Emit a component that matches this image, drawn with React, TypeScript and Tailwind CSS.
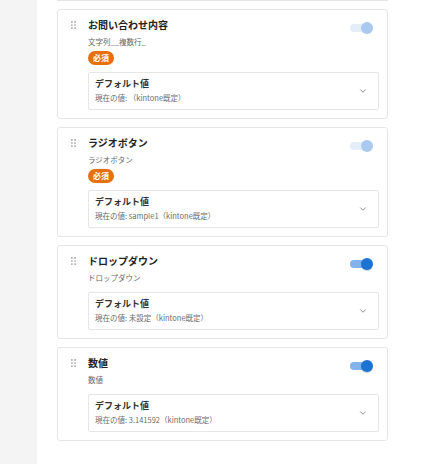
import { ChevronDown } from 'lucide-react';

type Field = {
	title: string;
	code: string;
	required: boolean;
	enabled: boolean;
	current: string;
};

const fields: Field[] = [
	{ title: 'お問い合わせ内容', code: '文字列__複数行_', required: true, enabled: false, current: '現在の値: （kintone既定）' },
	{ title: 'ラジオボタン', code: 'ラジオボタン', required: true, enabled: false, current: '現在の値: sample1（kintone既定）' },
	{ title: 'ドロップダウン', code: 'ドロップダウン', required: false, enabled: true, current: '現在の値: 未設定（kintone既定）' },
	{ title: '数値', code: '数値', required: false, enabled: true, current: '現在の値: 3.141592（kintone既定）' },
];

function DragHandle() {
	return (
		<svg className="w-[5px] h-[8px] text-[#9a9a9a]" viewBox="0 0 5 8" fill="currentColor">
			<circle cx="0.9" cy="0.9" r="0.85" />
			<circle cx="4.1" cy="0.9" r="0.85" />
			<circle cx="0.9" cy="4" r="0.85" />
			<circle cx="4.1" cy="4" r="0.85" />
			<circle cx="0.9" cy="7.1" r="0.85" />
			<circle cx="4.1" cy="7.1" r="0.85" />
		</svg>
	);
}

function Toggle({ enabled }: { enabled: boolean }) {
	return (
		<div className="relative w-[23px] h-[12px] mt-[4px] -mb-[2px] mr-[6px] flex items-center">
			<div className={enabled ? 'w-[20px] h-[8px] rounded-full bg-[#82b3ea]' : 'w-[20px] h-[8px] rounded-full bg-[#e5edf8]'} />
			<div
				className={
					enabled
						? 'absolute right-0 top-0 w-[12px] h-[12px] rounded-full bg-[#1b74d3] shadow-[0_1px_1px_rgba(0,0,0,0.2)]'
						: 'absolute right-0 top-0 w-[12px] h-[12px] rounded-full bg-[#a9c9f0]'
				}
			/>
		</div>
	);
}

function FieldCard({ field }: { field: Field }) {
	return (
		<div className="flex border border-[#e6e6e6] rounded-[3px] bg-white pl-[13px] pr-[8px] pt-[8px] pb-[8px]">
			<div className="w-[17px] shrink-0 h-[14px] flex items-center">
				<DragHandle />
			</div>
			<div className="flex-1 flex flex-col">
				<div className="flex items-start justify-between">
					<h3 className="text-[10px] leading-[14px] font-bold text-[#222]">{field.title}</h3>
					<Toggle enabled={field.enabled} />
				</div>
				<p className="mt-[4px] text-[7.5px] leading-[12px] text-[#666]">{field.code}</p>
				{field.required && (
					<span className="mt-[3px] self-start h-[14px] px-[5px] rounded-full bg-[#e5700d] text-white text-[8px] leading-[14px] font-bold">
						必須
					</span>
				)}
				<div
					className={
						field.required
							? 'mt-[7px] flex items-center justify-between border border-[#e6e6e6] rounded-[2px] pl-[6px] pr-[10px] pt-[5px] pb-[6px]'
							: 'mt-2 flex items-center justify-between border border-[#e6e6e6] rounded-[2px] pl-[6px] pr-[10px] pt-[5px] pb-[6px]'
					}
				>
					<div className="flex flex-col">
						<span className="text-[9px] leading-[12px] font-semibold text-[#333]">デフォルト値</span>
						<span className="mt-[2px] text-[7.5px] leading-[11px] text-[#6b6b6b]">{field.current}</span>
					</div>
					<ChevronDown className="w-[10px] h-[10px] text-[#666]" strokeWidth={1.75} />
				</div>
			</div>
		</div>
	);
}

export default function App() {
	return (
		<div
			className="flex w-[445px] h-[464px] overflow-hidden bg-white"
			style={{ fontFamily: '"Noto Sans CJK JP", "Noto Sans", sans-serif' }}
		>
			<div className="w-[37px] shrink-0 bg-[#f4f4f4]" />
			<div className="flex-1 pl-[20px]">
				<div className="w-[331px] flex flex-col gap-2">
					<div className="h-[1px] border-x border-b border-[#e6e6e6] rounded-b-[3px]" />
					{fields.map((f) => (
						<FieldCard key={f.title} field={f} />
					))}
				</div>
			</div>
		</div>
	);
}
